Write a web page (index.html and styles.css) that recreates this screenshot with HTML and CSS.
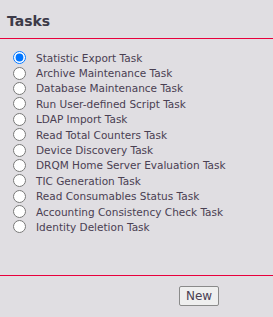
FILE: index.html
```html
<!DOCTYPE html>
<html lang="en">
<head>
    <meta charset="UTF-8">
    <title>Tasks</title>
    <link rel="stylesheet" href="styles.css">
</head>
<body>
    <div class="panel">
        <h2 class="panel-title">Tasks</h2>
        <form id="taskForm" class="task-list">
            <label class="task"><input type="radio" name="task" checked> Statistic Export Task</label>
            <label class="task"><input type="radio" name="task"> Archive Maintenance Task</label>
            <label class="task"><input type="radio" name="task"> Database Maintenance Task</label>
            <label class="task"><input type="radio" name="task"> Run User-defined Script Task</label>
            <label class="task"><input type="radio" name="task"> LDAP Import Task</label>
            <label class="task"><input type="radio" name="task"> Read Total Counters Task</label>
            <label class="task"><input type="radio" name="task"> Device Discovery Task</label>
            <label class="task"><input type="radio" name="task"> DRQM Home Server Evaluation Task</label>
            <label class="task"><input type="radio" name="task"> TIC Generation Task</label>
            <label class="task"><input type="radio" name="task"> Read Consumables Status Task</label>
            <label class="task"><input type="radio" name="task"> Accounting Consistency Check Task</label>
            <label class="task"><input type="radio" name="task"> Identity Deletion Task</label>
        </form>
        <div class="actions">
            <button type="button" class="btn">New</button>
        </div>
    </div>
</body>
</html>
```

FILE: styles.css
```css
body {
    margin: 0;
    background-color: #e0dee2;
    font-family: "DejaVu Sans", Verdana, sans-serif;
    color: #4a4052;
}
.panel {
    width: 273px;
}
.panel-title {
    margin: 0;
    padding: 12px 7px 8px;
    font-size: 14px;
    font-weight: bold;
    color: #3c3a48;
    border-bottom: 1px solid #e8003c;
    line-height: 18px;
}
.task-list {
    height: 225px;
    padding: 11px 0 0 12px;
    border-bottom: 1px solid #e8003c;
}
.task {
    display: flex;
    align-items: center;
    height: 15.4px;
    font-size: 10.5px;
}
.task input {
    margin: 0 10px 0 1px;
    width: 13px;
    height: 13px;
}
.actions {
    display: flex;
    justify-content: flex-end;
    padding: 10px 54px 0 0;
}
.btn {
    font-family: "DejaVu Sans", Verdana, sans-serif;
    font-size: 12px;
    color: #4a4052;
    background-color: #efefef;
    border: 1px solid #8a8a8a;
    border-radius: 2px;
    width: 40px;
    height: 20px;
    padding: 0;
}
```
